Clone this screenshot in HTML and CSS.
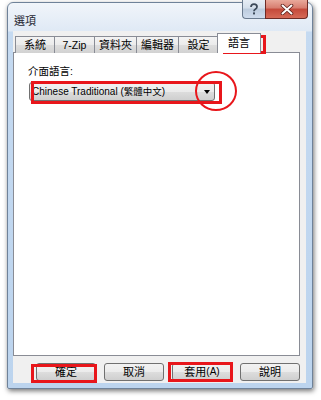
FILE: index.html
```html
<!DOCTYPE html>
<html lang="zh-Hant">
<head>
<meta charset="utf-8">
<title>選項</title>
<link rel="stylesheet" href="styles.css">
</head>
<body>
<div class="window">
  <div class="titlebar">
    <span class="title">選項</span>
    <div class="caption">
      <div class="cap help">
        <svg width="10" height="12" viewBox="0 0 10 12"><path d="M2 4 Q2 1.2 5 1.2 Q8 1.2 8 3.8 Q8 5.3 6.3 6.2 Q5 6.9 5 8.2" fill="none" stroke="#3d4a5a" stroke-width="1.8"/><rect x="4" y="9.4" width="2" height="2" fill="#3d4a5a"/></svg>
      </div>
      <div class="cap close">
        <svg width="14" height="11" viewBox="0 0 14 11"><path d="M2.5 1.5 L11.5 9.5 M11.5 1.5 L2.5 9.5" stroke="#5a1e18" stroke-width="3.6" stroke-linecap="round"/><path d="M2.5 1.5 L11.5 9.5 M11.5 1.5 L2.5 9.5" stroke="#ffffff" stroke-width="2" stroke-linecap="round"/></svg>
      </div>
    </div>
  </div>
  <div class="client">
    <div class="tabs">
      <div class="tab">系統</div>
      <div class="tab latin">7-Zip</div>
      <div class="tab">資料夾</div>
      <div class="tab">編輯器</div>
      <div class="tab">設定</div>
      <div class="tab selected">語言</div>
    </div>
    <div class="page">
      <div class="label">介面語言:</div>
      <div class="combo">
        <span class="combo-text">Chinese Traditional (<span class="cjk">繁體中文</span>)</span>
        <span class="arrow"></span>
      </div>
    </div>
    <div class="buttons">
      <div class="btn">確定</div>
      <div class="btn">取消</div>
      <div class="btn">套用<span class="acc">(A)</span></div>
      <div class="btn">說明</div>
    </div>
  </div>
</div>
<div class="mark mark-tab"></div>
<div class="mark mark-combo"></div>
<div class="mark mark-circle"></div>
<div class="mark mark-ok"></div>
<div class="mark mark-apply"></div>
</body>
</html>
```
FILE: styles.css
```css
html, body {
  margin: 0;
  padding: 0;
  background: #ffffff;
}
body {
  width: 321px;
  height: 400px;
  overflow: hidden;
  font-family: "Liberation Sans", "Noto Sans CJK TC", sans-serif;
  font-size: 10px;
  color: #000;
}
.window {
  margin: 2px 0 0 7px;
  width: 304px;
  height: 385px;
  border: 1px solid #6f8299;
  border-radius: 6px 6px 2px 2px;
  background: linear-gradient(to bottom, #f1f5fa 0px, #dfe9f5 28px, #c5daf1 29px, #bcd4ee 100%);
  box-shadow: 1px 2px 5px rgba(0, 0, 0, 0.55);
  display: flex;
  flex-direction: column;
}
.titlebar {
  height: 28px;
  display: flex;
  align-items: flex-start;
  justify-content: space-between;
}
.title {
  margin: 12px 0 0 6px;
  font-size: 11px;
  line-height: 12px;
  color: #1e2530;
}
.caption {
  display: flex;
  margin: -3px 4px 0 0;
}
.cap {
  height: 19px;
  box-sizing: border-box;
  display: flex;
  align-items: center;
  justify-content: center;
}
.help {
  width: 23px;
  border: 1px solid #6a7a8e;
  border-top: none;
  border-right: none;
  border-radius: 0 0 0 4px;
  background: linear-gradient(to bottom, #e6edf5 0%, #d5dfeb 45%, #bccbdd 50%, #cfdced 100%);
}
.close {
  width: 43px;
  border: 1px solid #6e2b25;
  border-top: none;
  border-radius: 0 0 4px 0;
  background: linear-gradient(to bottom, #e9a99b 0%, #d77d6f 45%, #c4493a 50%, #d66a57 100%);
}
.client {
  margin: 0 6px 0 5px;
  height: 352px;
  background: #f0f0f0;
  box-sizing: border-box;
  padding: 6px 6px 0 0;
  display: flex;
  flex-direction: column;
}
.tabs {
  display: flex;
  align-items: flex-end;
  padding-left: 2px;
  height: 16px;
  position: relative;
  z-index: 1;
  margin-bottom: -1px;
}
.tab {
  height: 17px;
  box-sizing: border-box;
  min-width: 40px;
  padding: 0 4px;
  border: 1px solid #898c95;
  border-bottom: none;
  border-left: none;
  background: linear-gradient(to bottom, #f3f3f3 0%, #ebebeb 50%, #dddddd 51%, #d2d2d2 100%);
  display: flex;
  align-items: center;
  justify-content: center;
  line-height: 12px;
  font-size: 11px;
  white-space: nowrap;
}
.latin {
  font-size: 10.5px;
}
.tab:first-child {
  border-left: 1px solid #898c95;
}
.selected {
  height: 20px;
  margin: 0 0 0 -2px;
  border-left: 1px solid #898c95;
  background: #ffffff;
  min-width: 44px;
  padding-bottom: 2px;
}
.page {
  height: 304px;
  box-sizing: border-box;
  border: 1px solid #898c95;
  background: #ffffff;
  padding: 12px 0 0 14px;
}
.label {
  line-height: 12px;
  font-size: 10.5px;
}
.combo {
  margin: 5px 0 0 1px;
  width: 186px;
  height: 19px;
  box-sizing: border-box;
  border: 1px solid #707070;
  border-radius: 3px;
  background: linear-gradient(to bottom, #f2f2f2 0%, #ebebeb 50%, #dddddd 51%, #cfcfcf 100%);
  display: flex;
  align-items: center;
  justify-content: space-between;
  padding: 0 4px 0 2px;
}
.combo-text {
  white-space: nowrap;
  line-height: 12px;
}
.cjk {
  font-size: 9.5px;
}
.arrow {
  width: 0;
  height: 0;
  border-left: 3.5px solid transparent;
  border-right: 3.5px solid transparent;
  border-top: 4px solid #000;
}
.buttons {
  display: flex;
  justify-content: flex-end;
  gap: 8px;
  margin-top: 7px;
}
.btn {
  width: 60px;
  height: 18px;
  box-sizing: border-box;
  border: 1px solid #707070;
  border-radius: 3px;
  background: linear-gradient(to bottom, #f2f2f2 0%, #ebebeb 50%, #dddddd 51%, #cfcfcf 100%);
  display: flex;
  align-items: center;
  justify-content: center;
  line-height: 12px;
  font-size: 11px;
}
.acc {
  font-size: 10px;
}
.mark {
  position: absolute;
  box-sizing: border-box;
  border: 3px solid #e8161b;
}
.mark-tab {
  left: 223px;
  top: 35px;
  width: 43px;
  height: 19px;
}
.mark-combo {
  left: 31px;
  top: 81px;
  width: 191px;
  height: 23px;
}
.mark-circle {
  left: 195px;
  top: 71px;
  width: 42px;
  height: 40px;
  border-width: 2px;
  border-radius: 50%;
}
.mark-ok {
  left: 31px;
  top: 364px;
  width: 66px;
  height: 19px;
}
.mark-apply {
  left: 168px;
  top: 362px;
  width: 65px;
  height: 20px;
}
```
